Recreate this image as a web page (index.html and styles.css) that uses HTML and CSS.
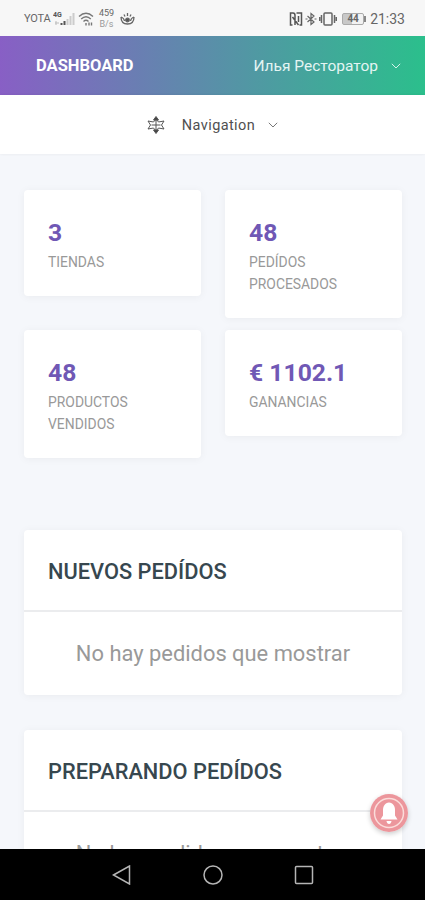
FILE: index.html
```html
<!DOCTYPE html>
<html lang="es">
  <head>
    <meta charset="UTF-8" />
    <meta name="viewport" content="width=device-width, initial-scale=1.0" />
    <title>Dashboard</title>
    <link rel="stylesheet" href="styles.css">
  </head>
  <body>
    <div class="phone">
      <div class="status_bar">
        <div class="status_left">
          <span class="carrier">YOTA</span>
          <svg class="signal" width="22" height="16" viewBox="0 0 22 16">
            <text x="0" y="6" class="signal_text">4G</text>
            <path d="M2 12h4M3 10v4" stroke="#bbb" />
            <path d="M8.5 14v-2M11.5 14v-4" stroke="#555" stroke-width="2" />
            <path d="M14.5 14V8M17.5 14V5M20.5 14V2" stroke="#ccc" stroke-width="2" />
          </svg>
          <svg class="wifi" width="16" height="16" viewBox="0 0 16 16" fill="none" stroke="#777" stroke-width="1.4">
            <path d="M1 5.5Q8-1 15 5.5M3.2 8Q8 3.4 12.8 8M5.5 10.5Q8 8 10.5 10.5" />
            <path d="M8 12v2.5M11 14.5v-3M13.5 14.5v-3" />
          </svg>
          <span class="speed">459<br /><i>B/s</i></span>
          <svg class="eye" width="15" height="14" viewBox="0 0 15 14" fill="none" stroke="#666" stroke-width="1.3">
            <path d="M1 5Q1 12 7.500 12Q14 12 14 5M1 5Q4 6 4.500 9M14 5Q11 6 10.500 9M7.500 1v3M4 2.500l1 2M11 2.500l-1 2" />
            <circle cx="7.500" cy="8" r="1.800" fill="#555" />
          </svg>
        </div>
        <div class="status_right">
          <svg width="14" height="14" viewBox="0 0 14 14" fill="none" stroke="#555" stroke-width="1.5">
            <path d="M3.500 13H1.500V1H4Q6 1 6 3.500V13M3.500 5L9.500 13M7.500 1H12.500V13H10.500M9.500 4V10" />
          </svg>
          <svg width="12" height="14" viewBox="0 0 12 14" fill="none" stroke="#666" stroke-width="1.2">
            <path d="M2.500 4L9 10L6 12.500V1.500L9 4L2.500 10M.5 7h2M9.500 7h2" />
          </svg>
          <svg class="vibrate" width="18" height="14" viewBox="0 0 18 14" fill="none" stroke="#666" stroke-width="1.5">
            <rect x="5" y="1" width="8" height="12" rx="1" />
            <path d="M2.500 3v8M15.500 3v8M.7 5v4M17.300 5v4" />
          </svg>
          <span class="battery">44</span>
          <span class="clock">21:33</span>
        </div>
      </div>

      <div class="header">
        <span class="brand">DASHBOARD</span>
        <span class="user">Илья Ресторатор</span>
        <svg class="arrow" width="10" height="6" viewBox="0 0 10 6" fill="none" stroke="#d5f3ea">
          <path d="M.8.8L5 5L9.200.8" />
        </svg>
      </div>

      <div class="navigation">
        <svg width="18" height="18" viewBox="0 0 18 18" fill="none" stroke="#555">
          <path d="M9 2V16M4.500 9H13.500" />
          <path d="M6.500 6L1 5L3.500 9L1 13L6.500 12L9 15L11.500 12L17 13L14.500 9L17 5L11.500 6L9 3Z" />
          <path d="M9 .5L11.500 4H6.500ZM9 17.500L6.500 14H11.500Z" fill="#444" />
        </svg>
        <span class="nav_text">Navigation</span>
        <svg width="10" height="6" viewBox="0 0 10 6" fill="none" stroke="#777">
          <path d="M.8.8L5 5L9.200.8" />
        </svg>
      </div>

      <div class="content">
        <div class="stats">
          <div class="card stat">
            <div class="number">3</div>
            <div class="label">TIENDAS</div>
          </div>
          <div class="card stat">
            <div class="number">48</div>
            <div class="label">PEDÍDOS PROCESADOS</div>
          </div>
          <div class="card stat">
            <div class="number">48</div>
            <div class="label">PRODUCTOS VENDIDOS</div>
          </div>
          <div class="card stat">
            <div class="number">€ 1102.1</div>
            <div class="label">GANANCIAS</div>
          </div>
        </div>

        <div class="card orders">
          <h2 class="title">NUEVOS PEDÍDOS</h2>
          <p class="message">No hay pedidos que mostrar</p>
        </div>

        <div class="card orders">
          <h2 class="title">PREPARANDO PEDÍDOS</h2>
          <p class="message">No hay pedidos que mostrar</p>
        </div>
      </div>

      <!-- notification button -->
      <div class="bell">
        <svg width="38" height="38" viewBox="0 0 38 38">
          <circle cx="19" cy="19" r="19" fill="#ec969c" />
          <circle cx="19" cy="19" r="14.500" fill="none" stroke="#fbdcda" stroke-width="1.500" />
          <path d="M19 8.500C15 9 13 12 13 16V21.500L10.500 25.500H27.500L25 21.500V16C25 12 23 9 19 8.500Z" fill="#fff" />
          <path d="M16.500 27H21.500Q21 30 19 30Q17 30 16.500 27Z" fill="#fff" />
        </svg>
      </div>

      <div class="android_bar">
        <svg width="20" height="20" viewBox="0 0 20 20">
          <path d="M1.500 10L17.500 1V19Z" />
        </svg>
        <svg width="20" height="20" viewBox="0 0 20 20">
          <circle cx="10" cy="10" r="9" />
        </svg>
        <svg width="20" height="20" viewBox="0 0 20 20">
          <rect x="1.500" y="1.500" width="17" height="17" rx="1" />
        </svg>
      </div>
    </div>
  </body>
</html>
```
FILE: styles.css
```css
body {
  margin: 0;
  font-family: Roboto, "Liberation Sans", sans-serif;
  background: #f5f7fb;
}
.phone {
  position: relative;
  display: flex;
  flex-direction: column;
  width: 425px;
  height: 900px;
  overflow: hidden;
}
.status_bar {
  flex: none;
  display: flex;
  justify-content: space-between;
  box-sizing: border-box;
  height: 36px;
  padding: 1px 20px 0 24px;
  background: #f7f7f7;
  color: #666666;
}
.status_left,
.status_right {
  display: flex;
  align-items: center;
}
.carrier {
  width: 29px;
  font-size: 11px;
  letter-spacing: -0.2px;
}
.signal_text {
  font-size: 7px;
  font-weight: bold;
  fill: #555555;
}
.wifi {
  margin-left: 3px;
}
.speed {
  width: 17px;
  margin: 0 5px 0 4px;
  font-size: 9px;
  line-height: 11px;
  text-align: center;
}
.speed i {
  font-style: normal;
  color: #999999;
}
.status_right svg {
  margin-right: 2px;
}
.status_right .vibrate {
  margin-right: 5px;
}
.status_right svg:first-child {
  margin-left: -2px;
}
.battery {
  position: relative;
  box-sizing: border-box;
  width: 22px;
  height: 12px;
  margin-right: 6px;
  border: 1px solid #aaaaaa;
  border-radius: 2px;
  background: linear-gradient(to right, #c8c8c8 45%, #f2f2f2 45%);
  font-size: 10px;
  font-weight: bold;
  line-height: 10px;
  text-align: center;
}
.battery::after {
  content: "";
  position: absolute;
  top: 2px;
  right: -3px;
  width: 2px;
  height: 6px;
  background: #888888;
}
.clock {
  font-size: 14px;
}
.header {
  flex: none;
  display: flex;
  align-items: center;
  box-sizing: border-box;
  height: 59px;
  padding: 0 24px 0 36px;
  background: linear-gradient(to right, #885fc5, #2bbf8c);
  color: #ffffff;
}
.brand {
  flex: 1;
  font-size: 16.5px;
  font-weight: bold;
}
.user {
  margin-right: 13px;
  font-size: 15.5px;
  color: #e4f5f3;
}
.navigation {
  flex: none;
  display: flex;
  align-items: center;
  justify-content: center;
  height: 59px;
  background: #ffffff;
  box-shadow: 0 0 3px rgba(0, 0, 0, 0.07);
}
.nav_text {
  margin: 2px 13px 0 17px;
  font-size: 14.5px;
  letter-spacing: 0.4px;
  color: #505050;
}
.content {
  flex: 1;
  min-height: 0;
  overflow: hidden;
  padding: 36px 23px 0 24px;
}
.card {
  border-radius: 4px;
  background: #ffffff;
  box-shadow: 0 1px 8px rgba(0, 0, 0, 0.05);
}
.stats {
  display: grid;
  grid-template-columns: 1fr 1fr;
  gap: 12px 24px;
  align-items: start;
  margin-bottom: 72px;
}
.stat {
  padding: 25px 24px 23px;
}
.number {
  font-size: 24.7px;
  font-weight: bold;
  line-height: 36px;
  color: #7058b5;
}
.label {
  font-size: 13.9px;
  line-height: 22px;
  color: #999999;
}
.orders {
  margin-bottom: 35px;
}
.title {
  margin: 0;
  padding: 3px 24px 0;
  border-bottom: 2px solid #ebecee;
  font-size: 21.8px;
  font-weight: 500;
  line-height: 77px;
  color: #37474f;
}
.message {
  margin: 0;
  font-size: 21.9px;
  line-height: 83px;
  text-align: center;
  color: #999999;
}
.bell {
  position: absolute;
  right: 17px;
  bottom: 68px;
  height: 38px;
  border-radius: 50%;
  box-shadow: 0 2px 5px rgba(0, 0, 0, 0.2);
}
.android_bar {
  flex: none;
  display: flex;
  align-items: center;
  justify-content: center;
  gap: 71px;
  height: 51px;
  background: #000000;
}
.android_bar svg {
  fill: none;
  stroke: #b5b5b5;
  stroke-width: 1.5;
}
```
